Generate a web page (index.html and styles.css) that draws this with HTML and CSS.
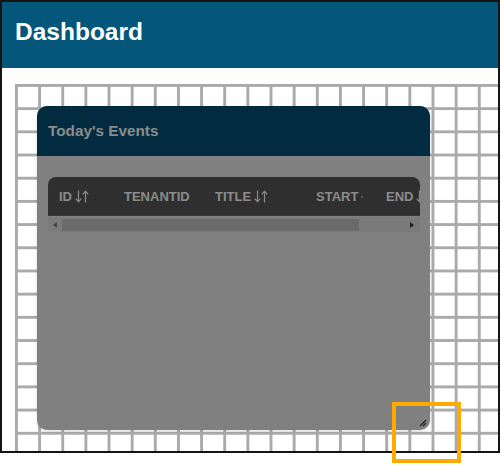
FILE: index.html
```html
<!DOCTYPE html>
<html>
<head>
<meta charset="utf-8">
<link rel="stylesheet" href="styles.css">
</head>
<body>
<div class="frame">
  <header class="topbar"><h1 class="brand">Dashboard</h1></header>
  <div class="gap"></div>
  <div class="grid">
    <section class="card">
      <div class="card-head">Today's Events</div>
      <div class="card-body">
        <div class="table">
          <div class="thead">
            <div class="th c-id">ID <svg class="sort" viewBox="0 0 14 14"><path d="M3.5 1v11.5M0.8 9.2l2.7 3.1 2.7-3.1M10.5 13V1.5M7.8 4.8l2.7-3.1 2.7 3.1"/></svg></div>
            <div class="th c-tenant">TENANTID</div>
            <div class="th c-title">TITLE <svg class="sort" viewBox="0 0 14 14"><path d="M3.5 1v11.5M0.8 9.2l2.7 3.1 2.7-3.1M10.5 13V1.5M7.8 4.8l2.7-3.1 2.7 3.1"/></svg></div>
            <div class="th c-start">START<span class="dot"></span></div>
            <div class="th c-end">END <svg class="sort" viewBox="0 0 14 14"><path d="M3.5 1v11.5M0.8 9.2l2.7 3.1 2.7-3.1M10.5 13V1.5M7.8 4.8l2.7-3.1 2.7 3.1"/></svg></div>
          </div>
          <div class="scrollbar">
            <span class="arrow left"></span>
            <div class="track"><div class="thumb"></div></div>
            <span class="arrow right"></span>
          </div>
        </div>
      </div>
      <svg class="resize" viewBox="0 0 8 8"><path d="M1 7L7 1M4 7L7 4"/></svg>
    </section>
  </div>
  <div class="highlight"></div>
</div>
</body>
</html>
```
FILE: styles.css
```css
* { box-sizing: border-box; }
html, body { margin: 0; padding: 0; background: #fff; }
body { width: 500px; height: 465px; font-family: "Liberation Sans", Arial, sans-serif; position: relative; }
.frame {
  width: 500px;
  height: 453px;
  border: 2px solid #141414;
  display: flex;
  flex-direction: column;
  overflow: hidden;
}
.topbar {
  height: 66px;
  background: #04567b;
  display: flex;
  align-items: center;
  padding-left: 13px;
  flex: none;
}
.brand {
  margin: 0;
  color: #fff;
  font-size: 24.5px;
  font-weight: bold;
  line-height: 1;
  margin-top: -6px;
}
.gap { height: 16px; flex: none; }
.grid {
  flex: 1;
  margin-left: 13px;
  background-color: #fff;
  background-image:
    linear-gradient(to right, #aaaaaa 3px, transparent 3px),
    linear-gradient(to bottom, #aaaaaa 3px, transparent 3px);
  background-size: 23.15px 23.2px;
  padding: 22px 0 0 22px;
}
.card {
  position: relative;
  width: 393px;
  height: 324px;
  border-radius: 10px;
  overflow: hidden;
  background: #808080;
  display: flex;
  flex-direction: column;
  box-shadow: 0 1px 3px rgba(0,0,0,0.15);
}
.card-head {
  height: 50px;
  background: #022b40;
  color: #8c8c8c;
  font-weight: bold;
  font-size: 15.3px;
  display: flex;
  align-items: center;
  padding-left: 11px;
  flex: none;
}
.card-body { padding: 21px 10px 0 11px; }
.table { width: 372px; }
.thead {
  height: 39px;
  background: #2f2f2f;
  border-radius: 8px 8px 0 0;
  display: flex;
  align-items: center;
  overflow: hidden;
  white-space: nowrap;
  border-bottom: 1px solid #3a3a3a;
}
.th {
  color: #8c8c8c;
  font-weight: bold;
  font-size: 13px;
  display: flex;
  align-items: center;
  flex: none;
}
.c-id { width: 76px; padding-left: 11px; }
.c-tenant { width: 91px; }
.c-title { width: 101px; }
.c-start { width: 70px; }
.c-end { width: 60px; }
.sort { width: 14px; height: 15px; margin-left: 3px; fill: none; stroke: #8a8a8a; stroke-width: 1.2; }
.dot { width: 2px; height: 2px; background: #5a5a5a; margin-left: 3px; margin-top: 1px; }
.scrollbar {
  height: 15px;
  margin-top: 1px;
  background: #7a7a7a;
  display: flex;
  align-items: center;
}
.track { flex: 1; height: 13px; display: flex; align-items: center; padding-left: 5px; }
.thumb { width: 297px; height: 12px; background: #6a6a6a; }
.arrow { width: 0; height: 0; border-top: 3.5px solid transparent; border-bottom: 3.5px solid transparent; flex: none; }
.arrow.left { border-right: 4px solid #454545; margin-left: 5px; }
.arrow.right { border-left: 4px solid #1f1f1f; margin-right: 6px; margin-left: 45px; }
.resize {
  position: absolute;
  right: 3px;
  bottom: 3px;
  width: 8px;
  height: 8px;
  fill: none;
  stroke: #222;
  stroke-width: 1.2;
}
.highlight {
  position: absolute;
  left: 392px;
  top: 402px;
  width: 69px;
  height: 61px;
  border: 4px solid #ffaa00;
}
```
